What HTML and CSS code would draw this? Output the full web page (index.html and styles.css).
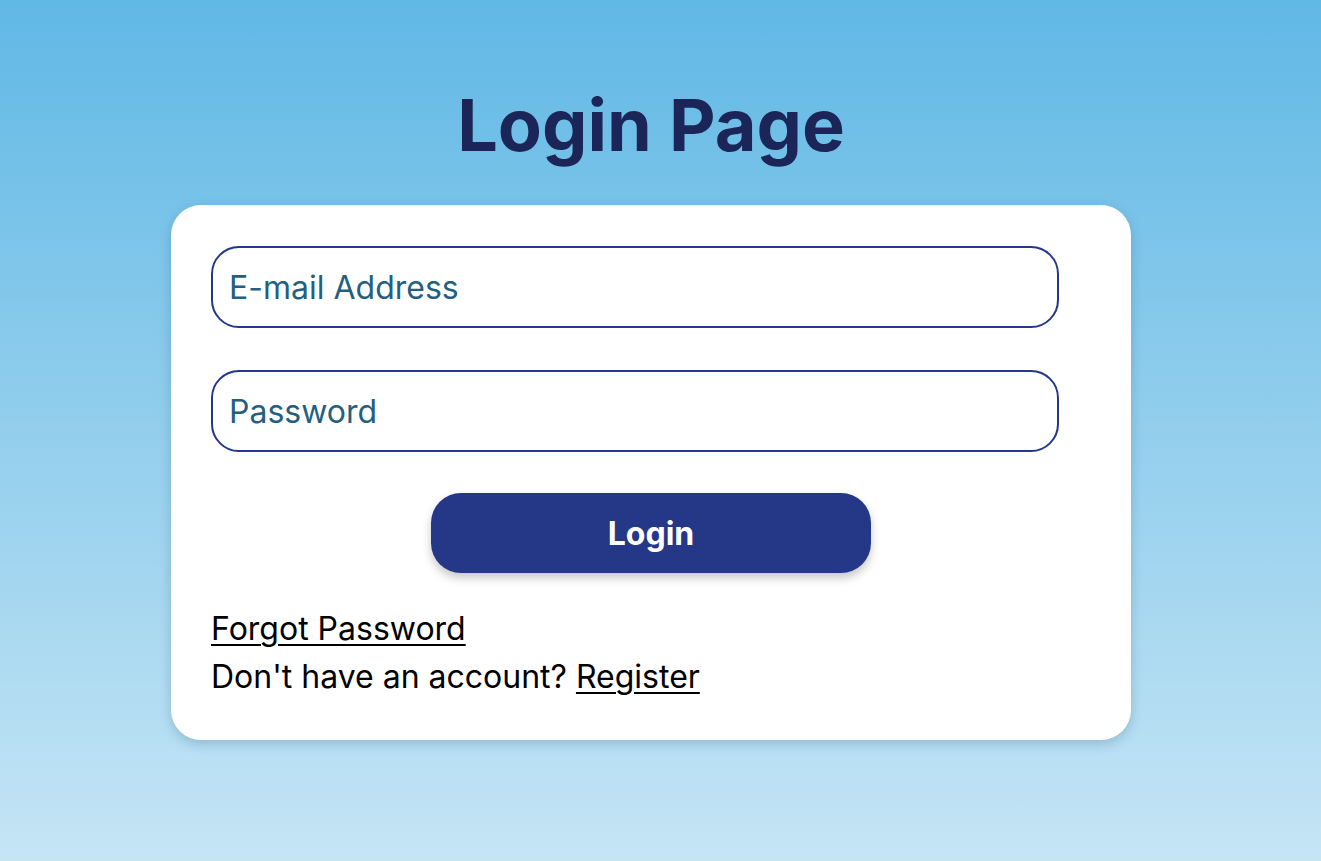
FILE: index.html
```html
<!DOCTYPE html>
<html lang="en">
<head>
<meta charset="utf-8">
<title>Login Page</title>
<link rel="stylesheet" href="styles.css">
</head>
<body>
  <main class="page">
    <h1 class="title">Login Page</h1>
    <form class="card">
      <input class="field" type="email" placeholder="E-mail Address">
      <input class="field" type="password" placeholder="Password">
      <button class="btn" type="button">Login</button>
      <div class="links">
        <a href="#" class="link">Forgot Password</a>
        <p class="line">Don't have an account? <a href="#" class="link">Register</a></p>
      </div>
    </form>
  </main>
</body>
</html>
```
FILE: styles.css
```css
* { box-sizing: border-box; }
html, body { margin: 0; height: 100%; }
body {
  font-family: Inter, "Noto Sans", sans-serif;
  background: linear-gradient(180deg, #60b8e5 0%, #c5e5f5 100%);
  min-height: 100vh;
}
.page {
  display: flex;
  flex-direction: column;
  align-items: center;
  padding-top: 82px;
  padding-right: 19px;
}
.title {
  margin: 0 0 37px;
  font-size: 72px;
  line-height: 86px;
  font-weight: 700;
  color: #1b2557;
}
.card {
  width: 960px;
  background: #fff;
  border-radius: 30px;
  padding: 41px 40px 40px;
  box-shadow: 0 4px 12px rgba(20, 60, 100, 0.22);
  display: flex;
  flex-direction: column;
  align-items: flex-start;
}
.field {
  width: 848px;
  height: 82px;
  border: 2px solid #24388a;
  border-radius: 28px;
  padding: 0 16px;
  font-family: inherit;
  font-size: 32px;
  color: #255f80;
  margin-bottom: 42px;
  outline: none;
  background: #fff;
}
.field::placeholder { color: #255f80; opacity: 1; }
.field + .field { margin-bottom: 41px; }
.btn {
  align-self: center;
  width: 440px;
  height: 80px;
  border: none;
  border-radius: 30px;
  background: #243887;
  color: #fff;
  font-family: inherit;
  font-size: 32px;
  font-weight: 700;
  box-shadow: 0 5px 10px rgba(0, 0, 0, 0.22);
  margin-bottom: 32px;
  cursor: pointer;
}
.links {
  font-size: 32px;
  line-height: 48px;
  color: #000;
  display: flex;
  flex-direction: column;
  align-items: flex-start;
  margin-bottom: -1px;
}
.line { margin: 0; }
.link { color: #000; text-decoration: underline; text-underline-offset: 4px; text-decoration-thickness: 2px; }
```
